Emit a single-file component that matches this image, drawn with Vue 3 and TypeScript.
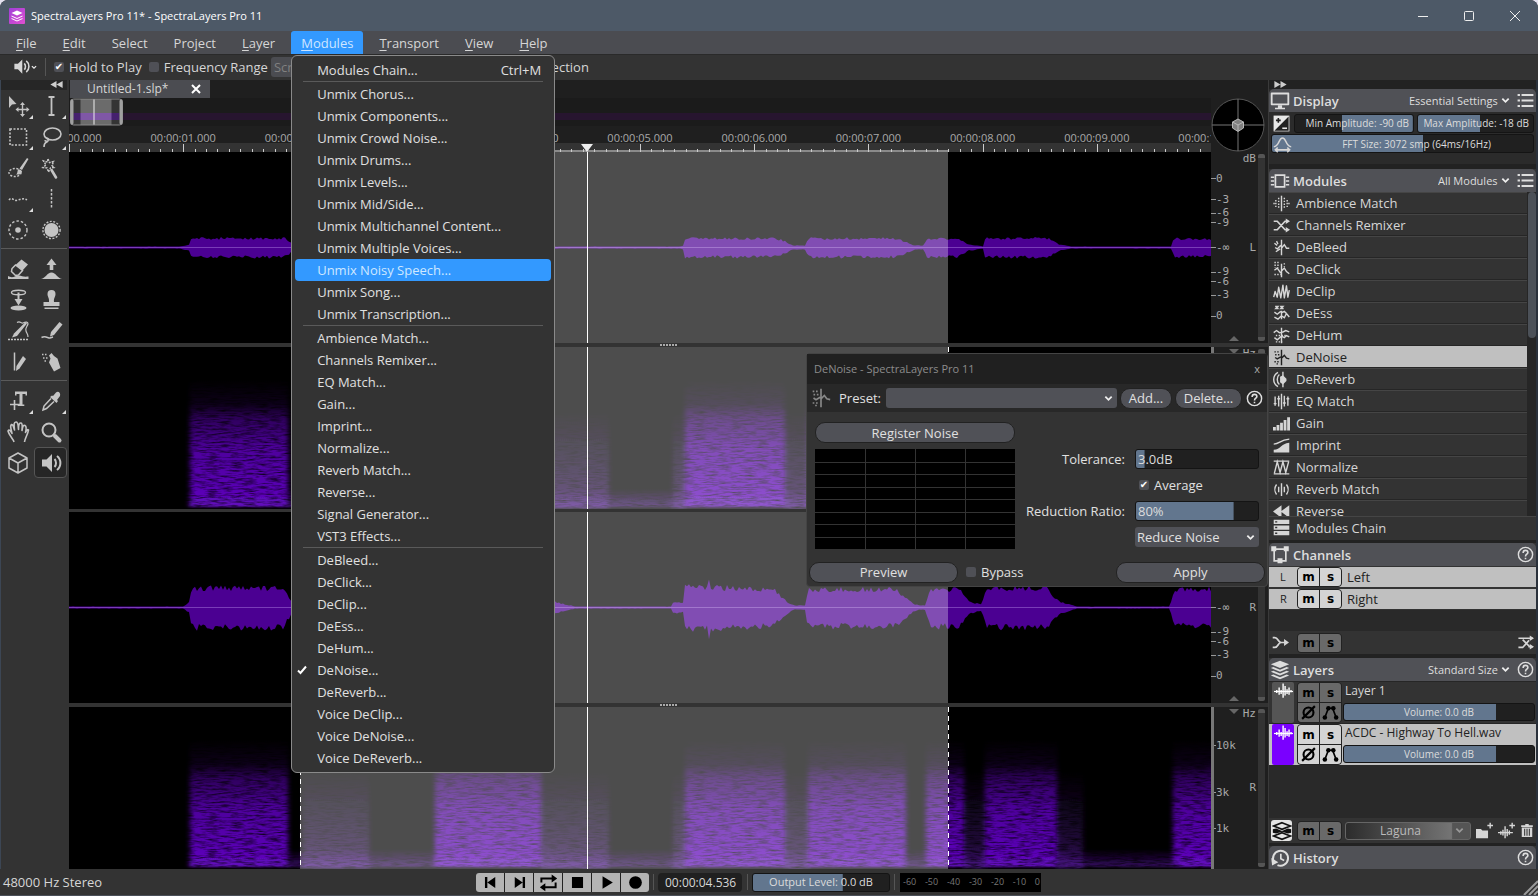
<script setup lang="ts">
import { ref } from 'vue'

interface MenuRow { label: string; shortcut?: string; checked?: boolean }
interface Tool { icon: string; name: string; more?: boolean; active?: boolean }

const menus = ['File', 'Edit', 'Select', 'Project', 'Layer', 'Modules', 'Transport', 'View', 'Help']
const accessKey: Record<string, number> = { Project: 3, Select: -1 }
const keyIndex = (m: string) => accessKey[m] ?? 0

const toRows = (names: string[]): MenuRow[] => names.map((n) => ({ label: n + '...', checked: n === 'DeNoise' }))
const menuGroups: MenuRow[][] = [
  [{ label: 'Modules Chain...', shortcut: 'Ctrl+M' }],
  toRows(['Unmix Chorus', 'Unmix Components', 'Unmix Crowd Noise', 'Unmix Drums', 'Unmix Levels', 'Unmix Mid/Side', 'Unmix Multichannel Content', 'Unmix Multiple Voices', 'Unmix Noisy Speech', 'Unmix Song', 'Unmix Transcription']),
  toRows(['Ambience Match', 'Channels Remixer', 'EQ Match', 'Gain', 'Imprint', 'Normalize', 'Reverb Match', 'Reverse', 'Signal Generator', 'VST3 Effects']),
  toRows(['DeBleed', 'DeClick', 'DeClip', 'DeEss', 'DeHum', 'DeNoise', 'DeReverb', 'Voice DeClip', 'Voice DeNoise', 'Voice DeReverb']),
]
const hovered = 'Unmix Noisy Speech...'

const toolGroups: Tool[][] = [
  [
    { icon: 'move', name: 'Move', more: true }, { icon: 'ibeam', name: 'Time selection', more: true },
    { icon: 'marquee', name: 'Rectangle selection', more: true }, { icon: 'lasso', name: 'Lasso', more: true },
    { icon: 'selbrush', name: 'Brush selection' }, { icon: 'wand', name: 'Magic wand' },
    { icon: 'hdots', name: 'Frequency selection', more: true }, { icon: 'vdots', name: 'Transient selection' },
    { icon: 'ringdot', name: 'Harmonics' }, { icon: 'disc', name: 'Area' },
  ],
  [
    { icon: 'eraser', name: 'Eraser' }, { icon: 'raise', name: 'Amplify' },
    { icon: 'lower', name: 'Transfer' }, { icon: 'stamp', name: 'Clone stamp' },
    { icon: 'heal', name: 'Heal' }, { icon: 'freqpencil', name: 'Frequency pencil' },
    { icon: 'pencil', name: 'Pencil' }, { icon: 'spray', name: 'Noise spray' },
  ],
  [
    { icon: 'text', name: 'Text', more: true }, { icon: 'dropper', name: 'Color picker', more: true },
    { icon: 'hand', name: 'Hand' }, { icon: 'zoom', name: 'Zoom' },
    { icon: 'cube', name: '3D' }, { icon: 'speaker', name: 'Playback', active: true },
  ],
]

const S = 'fill="none" stroke="currentColor"'
const F = 'fill="currentColor"'
const icons: Record<string, string> = {
  move: `<path ${F} d="M3 2v12l3-3.500 4.500-.5z"/><path ${S} stroke-width="1.400" d="M16.500 10v11M11 15.500h11"/><path ${F} d="M16.500 8l2.500 3h-5zM16.500 23l2.500-3h-5zM9.500 15.500l3-2.500v5zM23.500 15.500l-3-2.500v5z"/>`,
  ibeam: `<path ${S} stroke-width="1.800" d="M12.500 3.500v17M9.500 3h6M9.500 21h6"/>`,
  marquee: `<rect ${S} stroke-width="1.600" stroke-dasharray="2 1.500" x="4" y="4" width="16.500" height="16"/>`,
  lasso: `<ellipse ${S} stroke-width="1.600" cx="13.500" cy="9" rx="8.500" ry="6"/><path ${S} stroke-width="1.600" d="M7 13c3 0 3 3 .5 4-2 1-2.500 2-2.500 5M8.500 17.500c-1-1.500-2-2-3-1.500"/>`,
  selbrush: `<ellipse ${S} stroke-width="1.500" stroke-dasharray="2 1.500" cx="9" cy="16.500" rx="6" ry="4"/><path ${F} d="M21 2l1.500 1-6.500 11-2.500-1.500zM12.500 13l3.500 2c0 3-3 4-6 3.500 2-1 1-4 2.500-5.500z"/>`,
  wand: `<path ${S} stroke-width="1.500" stroke-dasharray="2 1" d="M9 3l1.500 3.500 4-1-1.500 4 2 2-3.500.5-2 4-1.500-4-4-.5 3-2.500-2.500-4 4 1z"/><path ${S} stroke-width="2.600" stroke-linecap="round" d="M12.500 14l4.500 7.500"/>`,
  hdots: `<path ${S} stroke-width="1.500" stroke-dasharray="2 1.500" d="M3 13c3-4 5 2 9 0 3-1 6-2 9 0"/>`,
  vdots: `<path ${S} stroke-width="1.500" stroke-dasharray="2.500 1.500" d="M12.500 2v20"/>`,
  ringdot: `<circle ${S} stroke-width="1.400" stroke-dasharray="2.500 2" cx="12" cy="12" r="9"/><circle ${F} cx="12" cy="12" r="2.800"/>`,
  disc: `<circle ${S} stroke-width="1.400" stroke-dasharray="2 1.500" cx="12.500" cy="12" r="8.600"/><circle ${F} cx="12.500" cy="12" r="7"/>`,
  eraser: `<path ${F} d="M15.500 2.500l6.500 5-5.500 6-7-5.500zM2 19c5 3 8-1 11-.5s4 1.500 9.500 1V22H2z"/><path ${S} stroke-width="1.500" d="M9.500 8l7 5.500-4 4.500-3 .5-4-4 .5-3z"/>`,
  raise: `<path ${F} d="M12.500 1.500l5 6.500h-3.200v5h-3.600V8H7.500zM2 22c5-1 6-6.500 10.500-6.500S18 21 23 22z"/>`,
  lower: `<ellipse ${S} stroke-width="1.400" cx="12.500" cy="4.500" rx="7" ry="2.200"/><path ${F} d="M11.500 4.500h2V11h3l-4 6.500-4-6.500h3z"/><ellipse ${F} cx="12.500" cy="20" rx="8" ry="2.500"/>`,
  stamp: `<path ${F} d="M12.500 2a4 4 0 0 1 4 4c0 3-2 4-1.500 8h5.500v4h-16v-4H10c.5-4-1.500-5-1.500-8a4 4 0 0 1 4-4zM5.500 19.500h14V21h-14z"/>`,
  heal: `<path ${S} stroke-width="1.600" stroke-dasharray="2 1" d="M2 20.500h20"/><path ${F} d="M19.500 3l1.500 1.500L11 17l-5 1.500 2-4z"/><path ${S} stroke-width="1.200" d="M11 3.500c3-2 4 1 6 .5 3-1.500 5-1 5 1-1 3-3 4-2 7s2 3 2 6"/>`,
  freqpencil: `<path ${F} d="M20.500 3l3 2.500L15 16l-4 1.500 1-4.500z"/><path ${S} stroke-width="1.600" d="M2.500 18.500c4-2 6 .5 8.500.5l3-1"/>`,
  pencil: `<path ${S} stroke-width="1.500" d="M8.500 2.500v18"/><path ${F} d="M17 6l3 3-6.500 9.500L10 21l.5-5z"/>`,
  spray: `<path ${F} d="M10 5.500l2.500-2.500 2.500 3 3.500 2.500 3 9.500-6.500 3.500-5-9 1.500-4z"/><path ${S} stroke-width="1.600" stroke-dasharray="1.500 1.500" d="M3 4.500h6M4 8h5M5.500 11h3"/>`,
  text: `<path ${F} d="M9 2.500h12v4h-1.500V5h-3v10.500h1.800V17h-6.600v-1.500h1.800V5h-3v1.500H9z"/><path ${S} stroke-width="1.600" d="M4 15.500h10M8.500 11v10"/>`,
  dropper: `<path ${F} d="M17 3.500c2-2 5 0 4 3.500l-3 4 1 1-1.500 2-6.500-6L13 6.500l1 .5z"/><path ${S} stroke-width="1.500" d="M12 9.500l-7 7.500-1 4 3.500-1.500 7.500-7"/>`,
  hand: `<path ${S} stroke-width="1.600" stroke-linejoin="round" d="M8 22c-.5-3-5-6.500-6-11 1-2 2.500-.5 4 2.500C5 8 3.500 6 5.500 4.500 7.500 4 7.500 8 8.500 10 8 5 7.500 2 10 2s2 4 2.500 7.500c0-4 .5-7 2.500-6.500s1 4.500 1 7.500c.5-3 1-6 3-5s1 5 .5 7c1-2 2-3.500 3-2.500-.5 4-3.500 8-4 12"/>`,
  zoom: `<circle ${S} stroke-width="2" cx="10" cy="10" r="6.500"/><path ${S} stroke-width="4" stroke-linecap="round" d="M16 16l4.500 4.500"/>`,
  cube: `<path ${S} stroke-width="1.500" stroke-linejoin="round" d="M12 2l9 5v10l-9 5-9-5V7zM3 7l9 5 9-5M12 12v10"/>`,
  speaker: `<path ${F} d="M3 8.500h4.500L13 3v18l-5.500-5.500H3z"/><path ${S} stroke-width="2" d="M15.500 8c2 2 2 6 0 8M18 5c4.500 3.500 4.500 10.500 0 14"/>`,
  display: `<path ${S} stroke-width="2.200" stroke-linejoin="round" d="M2 3h20v13H2z"/><path ${F} d="M9.500 17h5v3H18v2H6v-2h3.500z"/>`,
  modules: `<path ${S} stroke-width="2" d="M6.500 5h11v14h-11z"/><path ${S} stroke-width="2" d="M1 7.500h4M1 12h4M1 16.500h4M19 7.500h4M19 12h4M19 16.500h4"/>`,
  channels: `<path ${S} stroke-width="2" d="M5 5h14v14H5z"/><path ${F} d="M1.500 1.500h6v6h-6zM16.500 1.500h6v6h-6zM9 16h6v6H9z"/>`,
  layers: `<path ${F} d="M12 1l11 4-11 4.500L1 5zM1 9.500l3-1 8 3.200 8-3.200 3 1L12 14zM1 14l3-1 8 3.200 8-3.200 3 1-11 4.500zM1 18.500l3-1 8 3.200 8-3.200 3 1L12 23z"/>`,
  composite: `<path ${S} stroke-width="2" d="M12 2l10 4-10 4L2 6zM12 14l10 4-10 4-10-4z"/><path ${F} d="M1 10l4-1 7 3 7-3 4 1v4l-4 1-7-2-7 2-4-1z"/>`,
  history: `<path ${S} stroke-width="2.400" d="M5 17a9 9 0 1 1 4 3.500"/><path ${F} d="M1.500 12l1 9L10 17z"/><path ${S} stroke-width="2" d="M13 7v6l4 2"/>`,
  list: `<path ${S} stroke-width="2.400" d="M7 5h15M7 12h15M7 19h15"/><path ${S} stroke-width="2.400" d="M2 5h3M2 12h3M2 19h3"/>`,
  help: `<circle ${S} stroke-width="1.800" cx="12" cy="12" r="9"/><path ${S} stroke-width="2" d="M9 10c0-4.500 6-4 6-.5 0 2.200-3 2.200-3 5M12 16v2"/>`,
  contrast: `<path fill="#e8e8e8" d="M2 2h20v20H2z"/><path fill="#222" d="M21 3v18H3z"/><path stroke="#222" stroke-width="2" d="M5 8h6M8 5v6"/><path stroke="#e8e8e8" stroke-width="2" d="M13 18h6"/>`,
  fft: `<path ${S} stroke-width="2" d="M1 16c7 0 6-11 11-11s4 11 11 11M3 20h18M6 17l-3 3 3 3M18 17l3 3-3 3"/>`,
  ambience: `<path ${S} stroke-width="2" d="M12 1v22"/><path ${S} stroke-width="2" stroke-dasharray="2 2" d="M8 4v16M16 4v16M4 7v11M20 7v11M1.500 11v4M22.500 11v4"/>`,
  shuffle: `<path ${S} stroke-width="2.400" d="M1 6h5l11 12h4M1 18h5L17 6h4"/><path ${F} d="M18 2l6 4-6 4zM18 14l6 4-6 4z"/>`,
  debleed: `<path ${S} stroke-width="2" d="M12 1v22M12 13l4-5 3 5h4M2 6l4 3M3 12l3 2 5-5M5 3l2 4M4 18l6-4"/>`,
  declick: `<path ${S} stroke-width="2" d="M12 4v19M12 14l4-4 3 5 4 3M2 13l4-3 5 7"/><path ${S} stroke-width="2" stroke-dasharray="2 2" d="M3 1v9M7 1v9M2 19h9M16 3v5"/>`,
  declip: `<path ${S} stroke-width="2" stroke-linejoin="round" d="M1 20l2-8 3 8 2-14 3 15 3-18 2 18 3-17 2 16 2-10"/>`,
  deess: `<path ${S} stroke-width="2" d="M3 2h4L4 5h4M10 2h4l-3 3h4M2 10l4 3 5-4M2 17l5 3 5-5 4 3 3-6 4 5M12 8v12M12 11l4-2 3 3"/>`,
  dehum: `<path ${S} stroke-width="2" d="M12 1v22M1 8l4-3 4 3 5-1 4-2 5 2M2 15l4 3 6-5 4 2 3-3 4 2"/><path ${S} stroke-width="2" stroke-dasharray="2 2" d="M4 12h16M4 21h9"/>`,
  denoise: `<path ${S} stroke-width="2" d="M12 1v22M12 13l4-4 3 4 4 1M3 12l3 2 5-3"/><path ${S} stroke-width="2" stroke-dasharray="2 2" d="M2 4h8M3 8h6M2 18h8M5 21h4"/>`,
  dereverb: `<path ${S} stroke-width="2" d="M14 1v22M9 5c-4 3-4 11 0 14M7 2C-1 7-1 17 7 22"/><path ${F} d="M10 8l4-2 5 5v3l-5 5-4-3z"/>`,
  eqmatch: `<path ${S} stroke-width="2" d="M12 1v22M3 5v13M8 4v15M16 4v15M21 5v13M1 15h4M6 8h4M14 14h4M19 8h4"/>`,
  gain: `<path ${F} d="M0 17h4v5H0zM5 14h4v8H5zM10 11h4v11h-4zM15 7h4v15h-4zM20 3h4v19h-4z"/>`,
  imprint: `<path ${S} stroke-width="2" d="M1 10c9 0 8-6 22-7"/><path ${F} d="M1 22v-4c10 0 10-9 22-10v14z"/>`,
  normalize: `<path ${S} stroke-width="2" d="M1 3h22M1 21h22M2 20L6 4l4 15 4-15 4 15 4-15"/>`,
  reverbmatch: `<path ${S} stroke-width="2" d="M12 3v18M8 8v8M16 8v8M5 5c-3 4-3 10 0 14M19 5c3 4 3 10 0 14"/>`,
  reverse: `<path ${F} d="M12 3v18L0 12zM23 3v18l-12-9z"/>`,
  chain: `<path ${F} d="M1 1h22v6H1zM1 9h22v6H1zM1 17h22v6H1z"/><path fill="#333" d="M3 3h3v2H3zM3 11h3v2H3zM3 19h3v2H3z"/>`,
  merge: `<path ${S} stroke-width="2.400" d="M1 5h3c5 0 4 7 9 7h7M1 19h3c5 0 4-7 9-7"/><path ${F} d="M17 7l7 5-7 5z"/>`,
  route: `<path ${S} stroke-width="2.400" d="M2 6h20M2 19h6l9-10M16 18h6M8 8l10 10"/><path ${F} d="M18 2l6 4-6 4zM18 14l6 4-6 4z"/>`,
  wave: `<path ${S} stroke-width="1.800" d="M3.500 10v4M6.500 7v9M9 10v5M11.500 2v18M14 5v12M16.500 9v6M19 7v9M21.500 10v3"/><path ${S} stroke-width="1.500" d="M0 12h24"/>`,
  phase: `<circle ${S} stroke-width="3" cx="12" cy="12" r="7"/><path ${S} stroke-width="3" d="M3 21L21 3"/>`,
  nodes: `<path ${S} stroke-width="2.400" d="M4 19l5-13h6l5 13"/><circle ${F} cx="4" cy="19" r="3.200"/><circle ${F} cx="9" cy="6" r="3.200"/><circle ${F} cx="16" cy="6" r="3.200"/><circle ${F} cx="20" cy="19" r="3.200"/>`,
  folder: `<path ${F} d="M0 10h7l2 2h8v11H0z"/><path ${S} stroke-width="2" d="M20 1v8M16 5h8"/>`,
  waveadd: `<path ${S} stroke-width="2" d="M0 15h21M4 13v5M7 11v8M10 6v17M13 10v10M16 12v6M20 1v8M16 5h8"/>`,
  trash: `<path ${F} d="M9 1h6v2h7v3H2V3h7zM3 7h18v16H3z"/><path stroke="#333" stroke-width="1.800" d="M8 9v12M12 9v12M16 9v12"/>`,
}

const modules: [string, string][] = [
  ['ambience', 'Ambience Match'], ['shuffle', 'Channels Remixer'], ['debleed', 'DeBleed'], ['declick', 'DeClick'],
  ['declip', 'DeClip'], ['deess', 'DeEss'], ['dehum', 'DeHum'], ['denoise', 'DeNoise'], ['dereverb', 'DeReverb'],
  ['eqmatch', 'EQ Match'], ['gain', 'Gain'], ['imprint', 'Imprint'], ['normalize', 'Normalize'],
  ['reverbmatch', 'Reverb Match'], ['reverse', 'Reverse'],
]
const selectedModule = ref('DeNoise')
const channels = [['L', 'Left'], ['R', 'Right']]
const layers = [{ name: 'Layer 1', on: false }, { name: 'ACDC - Highway To Hell.wav', on: true }]

/* Timeline: ten seconds across the canvas, canvas units are 1142 wide */
const W = 1142
const seconds = Array.from({ length: 11 }, (_, i) => ({ left: i * 10 + '%', text: `00:00:${String(i).padStart(2, '0')}.000` }))
const ticks = Array.from({ length: 101 }, (_, i) => {
  const x = Math.round((i * W) / 100) + 0.5
  return `M${x} ${i % 10 ? 6 : 1}V9`
}).join('')

let seed = 11
const rnd = () => {
  seed = (seed * 1103515245 + 12345) % 2147483648
  return seed / 2147483648
}
function wavePath(env: [number, number][], mid: number): string {
  const up: string[] = []
  const down: string[] = []
  let k = 0
  for (let x = 0; x <= W; x += 2) {
    while (k < env.length - 2 && env[k + 1][0] < x) k++
    const [x0, a0] = env[k]
    const [x1, a1] = env[k + 1]
    const a = a0 + (a1 - a0) * Math.min(1, Math.max(0, (x - x0) / (x1 - x0)))
    up.push(`${x} ${(mid - a * (0.84 + rnd() * 0.32)).toFixed(1)}`)
    down.unshift(`${x} ${(mid + a * (0.86 + rnd() * 0.36)).toFixed(1)}`)
  }
  return `M${up.join('L')}L${down.join('L')}Z`
}
const waveL = wavePath([[0, 1], [111, 1], [120, 3], [122, 9], [216, 9], [222, 5], [232, 2], [360, 2], [362, 10], [470, 10], [484, 1], [610, 1], [615, 2], [616, 9], [708, 9], [718, 5], [724, 2], [737, 2], [739, 9], [828, 9], [846, 2], [855, 2], [858, 9], [889, 9], [899, 3], [915, 1], [916, 9], [980, 9], [990, 3], [1002, 1], [1102, 1], [1105, 9], [1142, 8]], 95.5)
const waveR = wavePath([[0, 1], [115, 1], [120, 5], [123, 19], [214, 19], [222, 7], [232, 2], [360, 2], [362, 18], [470, 18], [488, 5], [506, 1], [602, 1], [604, 5], [614, 5], [616, 20], [638, 20], [640, 28], [642, 20], [704, 18], [719, 5], [726, 2], [736, 2], [739, 18], [826, 18], [844, 4], [850, 2], [856, 2], [862, 18], [890, 18], [900, 6], [912, 3], [918, 19], [978, 19], [990, 6], [1008, 1], [1101, 1], [1105, 17], [1142, 18]], 95.5)

const bursts = [
  { x: 121, w: 98 }, { x: 366, w: 106 }, { x: 616, w: 100 }, { x: 739, w: 98 },
  { x: 857, w: 38 }, { x: 916, w: 72 }, { x: 1104, w: 50 },
]
const hazes = [{ x: 234, w: 66 }, { x: 470, w: 70 }, { x: 604, w: 12 }, { x: 716, w: 24 }, { x: 895, w: 22 }, { x: 988, w: 26 }]

const dbMarks = [['0', 14], ['-3', 25], ['-6', 32], ['-9', 37], ['-∞', 50], ['-9', 63], ['-6', 68], ['-3', 75], ['0', 86]] as [string, number][]
const hzMarks = [['10k', 24], ['3k', 53], ['1k', 75]] as [string, number][]
const panes = [
  { id: 'L', kind: 'wave', path: waveL, marks: dbMarks, unit: 'dB' },
  { id: 'L', kind: 'spec', path: '', marks: hzMarks, unit: 'Hz' },
  { id: 'R', kind: 'wave', path: waveR, marks: dbMarks, unit: '' },
  { id: 'R', kind: 'spec', path: '', marks: hzMarks, unit: 'Hz' },
]

const transport = [
  ['Go to start', '<path d="M5 5h3v14H5zM18 5v14l-10-7z"/>'],
  ['Go to end', '<path d="M16 5h3v14h-3zM6 5v14l10-7z"/>'],
  ['Loop', '<path fill="none" stroke="#000" stroke-width="2.500" d="M3 12V7h14M21 12v6H7"/><path d="M16 2l7 5-7 5zM8 13l-7 5 7 5z"/>'],
  ['Stop', '<path d="M5 5h14v14H5z"/>'],
  ['Play', '<path d="M7 4l13 8-13 8z"/>'],
  ['Record', '<circle cx="12" cy="12" r="8"/>'],
]
const meter = ['-60', '-50', '-40', '-30', '-20', '-10', '0']
const holdToPlay = ref(true)
const freqRange = ref(false)
const average = ref(true)
const bypass = ref(false)
</script>

<template>
  <div class="window">
    <header class="titlebar">
      <svg class="logo" viewBox="0 0 16 16"><defs><linearGradient id="lg" x1="0" y1="0" x2="1" y2="1"><stop offset="0" stop-color="#a03fd8" /><stop offset="1" stop-color="#e04fd0" /></linearGradient></defs><rect width="16" height="16" rx="1" fill="url(#lg)" /><path fill="#fff" d="M8 2.500l5.500 2.500L8 7.500 2.500 5zM2.500 7.500L8 10l5.500-2.500v1L8 11 2.500 8.500zM2.500 10L8 12.500l5.500-2.500v1L8 13.500 2.500 11z" /></svg>
      <span class="title">SpectraLayers Pro 11* - SpectraLayers Pro 11</span>
      <div class="winbtns">
        <button aria-label="Minimize"><svg viewBox="0 0 12 12"><path d="M1 6.500h10" /></svg></button>
        <button aria-label="Maximize"><svg viewBox="0 0 12 12"><rect x="1.500" y="1.500" width="9" height="9" rx="1" /></svg></button>
        <button aria-label="Close"><svg viewBox="0 0 12 12"><path d="M1 1l10 10M11 1L1 11" /></svg></button>
      </div>
    </header>

    <nav class="menubar">
      <div v-for="m in menus" :key="m" class="menu">
        <button class="menu-title" :class="{ open: m === 'Modules' }"><template v-if="keyIndex(m) >= 0">{{ m.slice(0, keyIndex(m)) }}<u>{{ m[keyIndex(m)] }}</u>{{ m.slice(keyIndex(m) + 1) }}</template><template v-else>{{ m }}</template></button>
        <div v-if="m === 'Modules'" class="popup" role="menu">
          <div v-for="(g, gi) in menuGroups" :key="gi" class="popup-group">
            <button v-for="r in g" :key="r.label" role="menuitem" class="popup-item" :class="{ hover: r.label === hovered }">
              <svg v-if="r.checked" class="check" viewBox="0 0 10 10"><path d="M1 5.500l2.500 2.500L9 1.500" /></svg>
              <span>{{ r.label }}</span><span v-if="r.shortcut">{{ r.shortcut }}</span>
            </button>
          </div>
        </div>
      </div>
    </nav>

    <div class="toolbar">
      <button class="listen" aria-label="Playback mode"><svg class="i18" viewBox="0 0 24 24" v-html="icons.speaker" /><svg class="chev tiny" viewBox="0 0 10 10"><path d="M1.500 3.500L5 7l3.500-3.500" /></svg></button>
      <span class="vsep" />
      <label class="tick"><input v-model="holdToPlay" type="checkbox" />Hold to Play</label>
      <label class="tick"><input v-model="freqRange" type="checkbox" />Frequency Range</label>
      <button class="scrub" disabled>Scrub</button>
      <span>Selection</span>
    </div>

    <main class="work">
      <aside class="tools">
        <div class="collapse"><svg viewBox="0 0 14 8"><path d="M7 0v8L0 4zM14 0v8L7 4z" /></svg></div>
        <div v-for="(g, gi) in toolGroups" :key="gi" class="tool-group">
          <button v-for="t in g" :key="t.icon" class="tool" :class="{ more: t.more, active: t.active }" :aria-label="t.name"><svg class="i24" viewBox="0 0 24 24" v-html="icons[t.icon]" /></button>
        </div>
      </aside>

      <section class="center">
        <div class="tabs"><div class="tab"><span>Untitled-1.slp*</span><button aria-label="Close tab"><svg viewBox="0 0 10 10"><path d="M1 1l8 8M9 1L1 9" /></svg></button></div></div>
        <div class="head">
          <div class="timeline">
            <div class="overview"><div class="ov-line" />
              <svg class="ov-box" viewBox="0 0 54 28"><rect x="1" y="1" width="52" height="26" fill="#343434" /><rect x="11" y="1" width="31" height="26" fill="#6b6b6b" /><rect x="4" y="15" width="46" height="7" fill="#45206e" /><rect x="11" y="15" width="31" height="7" fill="#7f57a6" /><path stroke="#eee" d="M24.500 1v26" /><rect x="1" y="1" width="52" height="26" rx="3" fill="none" stroke="#8a8a8a" /><path stroke="#a0a0a0" stroke-width="3" stroke-linecap="round" d="M2.500 3v22M51.500 3v22" /></svg>
            </div>
            <div class="ruler">
              <span v-for="s in seconds" :key="s.text" class="stamp" :style="{ left: s.left }">{{ s.text }}</span>
              <svg class="ticks" viewBox="0 0 1142 9" preserveAspectRatio="none"><rect width="1142" height="9" fill="#333" /><rect x="231" y="7" width="648" height="2" fill="#8a8a8a" /><path :d="ticks" stroke="#ccc" /><path d="M512 1h12l-6 8z" fill="#eee" /></svg>
            </div>
          </div>
          <svg class="gizmo" viewBox="0 0 54 54"><circle cx="27" cy="27" r="26" fill="#000" stroke="#555" /><path stroke="#777" d="M27 1v52M1 27h52" /><path d="M27 21l5.500 3v6L27 33.500l-5.500-3.500v-6z" fill="#808080" stroke="#b8b8b8" /><path d="M21.500 24l5.500 3 5.500-3M27 27v6" stroke="#b8b8b8" fill="none" /></svg>
        </div>

        <div class="panes">
          <svg class="defs" width="0" height="0" aria-hidden="true"><defs>
            <linearGradient id="burst" x1="0" y1="0" x2="0" y2="1"><stop offset="0" stop-color="#5a00b0" stop-opacity="0" /><stop offset=".2" stop-color="#5a00b0" stop-opacity=".14" /><stop offset=".32" stop-color="#5000a0" stop-opacity=".6" /><stop offset=".55" stop-color="#5600ae" stop-opacity=".9" /><stop offset="1" stop-color="#5e04be" /></linearGradient>
            <linearGradient id="haze" x1="0" y1="0" x2="0" y2="1"><stop offset=".2" stop-color="#5a20a0" stop-opacity="0" /><stop offset=".7" stop-color="#5a20a0" stop-opacity=".3" /><stop offset="1" stop-color="#5a20a0" stop-opacity=".5" /></linearGradient>
            <linearGradient id="floor" x1="0" y1="0" x2="0" y2="1"><stop offset="0" stop-color="#5a00b0" stop-opacity="0" /><stop offset="1" stop-color="#6a20c0" stop-opacity=".5" /></linearGradient>
            <filter id="soft" x="-10%" y="-10%" width="120%" height="120%"><feGaussianBlur stdDeviation="2.500 1" /></filter>
            <filter id="grain" x="0" y="0" width="100%" height="100%"><feTurbulence type="fractalNoise" baseFrequency="0.08 0.6" numOctaves="3" seed="4" /><feColorMatrix values="0 0 0 0 0  0 0 0 0 0  0 0 0 0 0  1.600 0 0 0 -0.640" /></filter>
          </defs></svg>
          <template v-for="(p, i) in panes" :key="i">
            <div v-if="i" class="split" :class="{ grip: i !== 2 }" />
            <div class="pane" :class="p.kind">
              <svg v-if="p.kind === 'wave'" class="canvas" viewBox="0 0 1142 191" preserveAspectRatio="none">
                <path :d="p.path" fill="#4b0092" />
                <path d="M0 95.500h1142" stroke="#7a3cb8" />
                <rect x="231" width="648" height="191" fill="#fff" fill-opacity=".3" />
                <path d="M518.500 0v191" stroke="#fff" vector-effect="non-scaling-stroke" />
              </svg>
              <svg v-else class="canvas" viewBox="0 0 1142 162" preserveAspectRatio="none">
                <g filter="url(#soft)">
                  <rect v-for="h in hazes" :key="h.x" :x="h.x" y="40" :width="h.w" height="122" fill="url(#haze)" />
                  <rect v-for="b in bursts" :key="b.x" :x="b.x" y="32" :width="b.w" height="128" fill="url(#burst)" />
                  <rect x="120" y="142" width="1022" height="18" fill="url(#floor)" />
                </g>
                <rect width="1142" height="162" filter="url(#grain)" />
                <rect x="231" width="648" height="162" fill="#fff" fill-opacity=".3" />
                <path d="M231.500 0v162M879.500 0v162" stroke="#fff" stroke-dasharray="5 4" />
                <path d="M518.500 0v162" stroke="#fff" vector-effect="non-scaling-stroke" />
              </svg>
              <div class="scale">
                <span class="unit">{{ p.unit }}</span>
                <span v-for="(m, mi) in p.marks" :key="mi" class="mark" :style="{ top: m[1] + '%' }">{{ m[0] }}</span>
                <span class="side">{{ p.id }}</span>
                <i v-if="p.kind === 'wave'" class="tri up" /><i v-else class="tri down" />
                <i class="vbar" />
              </div>
            </div>
          </template>
        </div>

        <form class="dialog" @submit.prevent>
          <div class="dlg-title"><span>DeNoise - SpectraLayers Pro 11</span><button type="button" aria-label="Close dialog">x</button></div>
          <div class="dlg-preset">
            <svg class="i20 dim" viewBox="0 0 24 24" v-html="icons.denoise" />
            <label for="preset">Preset:</label>
            <span class="combo box grow"><select id="preset"><option></option></select><svg class="chev" viewBox="0 0 10 10"><path d="M1.500 3L5 6.500 8.500 3" /></svg></span>
            <button type="button" class="pill add">Add...</button>
            <button type="button" class="pill del">Delete...</button>
            <button type="button" class="flat" aria-label="Help"><svg class="i18" viewBox="0 0 24 24" v-html="icons.help" /></button>
          </div>
          <div class="dlg-body">
            <div class="noise">
              <button type="button" class="pill">Register Noise</button>
              <svg class="graph" viewBox="0 0 200 100" preserveAspectRatio="none"><rect width="200" height="100" fill="#000" /><path stroke="#333" d="M50.500 0v100M100.500 0v100M150.500 0v100M0 13.500h200M0 25.500h200M0 38.500h200M0 50.500h200M0 63.500h200M0 75.500h200M0 88.500h200" /></svg>
            </div>
            <div class="params">
              <label for="tol">Tolerance:</label>
              <div class="slider left"><input id="tol" type="range" value="7" class="p7" /><span>3.0dB</span></div>
              <label class="tick avg"><input v-model="average" type="checkbox" />Average</label>
              <label for="ratio">Reduction Ratio:</label>
              <div class="slider left"><input id="ratio" type="range" value="80" class="p80" /><span>80%</span></div>
              <span class="combo box avg"><select aria-label="Mode"><option>Reduce Noise</option></select><svg class="chev" viewBox="0 0 10 10"><path d="M1.500 3L5 6.500 8.500 3" /></svg></span>
            </div>
          </div>
          <div class="dlg-foot">
            <button type="button" class="pill wide">Preview</button>
            <label class="tick"><input v-model="bypass" type="checkbox" />Bypass</label>
            <button class="pill wide end">Apply</button>
          </div>
        </form>
      </section>

      <aside class="side-panels">
        <div class="collapse right"><svg viewBox="0 0 14 8"><path d="M0 0v8l7-4zM7 0v8l7-4z" /></svg></div>

        <section class="panel display">
          <h2 class="ph"><svg class="i20" viewBox="0 0 24 24" v-html="icons.display" /><span>Display</span>
            <span class="combo"><select aria-label="Display preset"><option>Essential Settings</option></select><svg class="chev" viewBox="0 0 10 10"><path d="M1.500 3L5 6.500 8.500 3" /></svg></span>
            <button class="flat" aria-label="Display options"><svg class="i18" viewBox="0 0 24 24" v-html="icons.list" /></button></h2>
          <div class="amp">
            <svg class="i18" viewBox="0 0 24 24" v-html="icons.contrast" />
            <label class="slider small"><input type="range" value="50" class="pmin" /><span class="toright">Min Amplitude: -90 dB</span></label>
            <label class="slider small"><input type="range" value="54" class="p54" /><span class="toright">Max Amplitude: -18 dB</span></label>
          </div>
          <label class="slider small fft"><input type="range" value="58" class="p58" /><svg class="i18" viewBox="0 0 24 24" v-html="icons.fft" /><span>FFT Size: 3072 smp (64ms/16Hz)</span></label>
        </section>

        <section class="panel mods">
          <h2 class="ph"><svg class="i20" viewBox="0 0 24 24" v-html="icons.modules" /><span>Modules</span>
            <span class="combo"><select aria-label="Module filter"><option>All Modules</option></select><svg class="chev" viewBox="0 0 10 10"><path d="M1.500 3L5 6.500 8.500 3" /></svg></span>
            <button class="flat" aria-label="Module options"><svg class="i18" viewBox="0 0 24 24" v-html="icons.list" /></button></h2>
          <div class="mod-area">
            <ul class="mod-list">
              <li v-for="m in modules" :key="m[1]"><button class="mod" :class="{ on: m[1] === selectedModule }" @click="selectedModule = m[1]"><svg class="i16" viewBox="0 0 24 24" v-html="icons[m[0]]" />{{ m[1] }}</button></li>
            </ul>
            <i class="thumb" />
          </div>
          <button class="mod chain"><svg class="i16" viewBox="0 0 24 24" v-html="icons.chain" />Modules Chain</button>
        </section>

        <section class="panel chans">
          <h2 class="ph"><svg class="i20" viewBox="0 0 24 24" v-html="icons.channels" /><span>Channels</span>
            <button class="flat push" aria-label="Channels help"><svg class="i18" viewBox="0 0 24 24" v-html="icons.help" /></button></h2>
          <div v-for="c in channels" :key="c[0]" class="chan"><span class="cid">{{ c[0] }}</span><span class="ms lit"><button>m</button><button>s</button></span><span>{{ c[1] }}</span></div>
          <div class="blank" />
          <div class="strip"><svg class="i16" viewBox="0 0 24 24" v-html="icons.merge" /><span class="ms"><button>m</button><button>s</button></span><button class="flat push" aria-label="Routing"><svg class="i16" viewBox="0 0 24 24" v-html="icons.route" /></button></div>
        </section>

        <section class="panel lays">
          <h2 class="ph"><svg class="i20" viewBox="0 0 24 24" v-html="icons.layers" /><span>Layers</span>
            <span class="combo"><select aria-label="Layer size"><option>Standard Size</option></select><svg class="chev" viewBox="0 0 10 10"><path d="M1.500 3L5 6.500 8.500 3" /></svg></span>
            <button class="flat" aria-label="Layers help"><svg class="i18" viewBox="0 0 24 24" v-html="icons.help" /></button></h2>
          <div v-for="l in layers" :key="l.name" class="layer" :class="{ on: l.on }">
            <div class="swatch"><svg class="i18" viewBox="0 0 24 24" v-html="icons.wave" /></div>
            <div class="quad ms" :class="{ lit: l.on }"><button>m</button><button>s</button><button aria-label="Phase"><svg class="i16" viewBox="0 0 24 24" v-html="icons.phase" /></button><button aria-label="Envelope"><svg class="i16" viewBox="0 0 24 24" v-html="icons.nodes" /></button></div>
            <div class="lbody"><span class="lname">{{ l.name }}</span><label class="slider small"><input type="range" value="79" class="p79" /><span>Volume: 0.0 dB</span></label></div>
          </div>
          <div class="blank" />
          <div class="strip tall">
            <button class="white" aria-label="Composite"><svg class="i20" viewBox="0 0 24 24" v-html="icons.composite" /></button>
            <span class="ms"><button>m</button><button>s</button></span>
            <span class="combo laguna"><select aria-label="Color map"><option>Laguna</option></select><svg class="chev" viewBox="0 0 10 10"><path d="M1.500 3L5 6.500 8.500 3" /></svg></span>
            <button class="flat" aria-label="New group"><svg class="i16" viewBox="0 0 24 24" v-html="icons.folder" /></button>
            <button class="flat" aria-label="New layer"><svg class="i16" viewBox="0 0 24 24" v-html="icons.waveadd" /></button>
            <button class="flat" aria-label="Delete layer"><svg class="i16 narrow" viewBox="0 0 24 24" v-html="icons.trash" /></button>
          </div>
        </section>

        <section class="panel hist">
          <h2 class="ph"><svg class="i20" viewBox="0 0 24 24" v-html="icons.history" /><span>History</span>
            <button class="flat push" aria-label="History help"><svg class="i18" viewBox="0 0 24 24" v-html="icons.help" /></button></h2>
        </section>
      </aside>
    </main>

    <footer class="status">
      <span class="fmt">48000 Hz Stereo</span>
      <div class="deck"><button v-for="t in transport" :key="t[0]" :aria-label="t[0]"><svg class="i18" viewBox="0 0 24 24" v-html="t[1]" /></button></div>
      <i class="vsep" />
      <input class="clock" aria-label="Position" value="00:00:04.536" />
      <i class="vsep" />
      <label class="slider out"><input type="range" value="66" class="p66" /><span>Output Level: 0.0 dB</span></label>
      <i class="vsep" />
      <div class="meter"><span v-for="v in meter" :key="v">{{ v }}</span></div>
      <svg class="sizer" viewBox="0 0 16 16"><path d="M2 16L16 2M7 16l9-9M12 16l4-4" /></svg>
    </footer>
  </div>
</template>

<style>
body { margin: 0; background: #e4e2f0; }
</style>
<style scoped>
* { box-sizing: border-box; }
.window { display: flex; flex-direction: column; height: 100vh; min-height: 896px; min-width: 1200px; overflow: hidden; border-radius: 8px 8px 0 0; background: #333; color: #d6d6d6; font: 13px/18px "Open Sans", "Noto Sans", sans-serif; }
button, select, input { font: inherit; color: inherit; margin: 0; padding: 0; border: 0; background: none; border-radius: 0; }
button { display: flex; align-items: center; justify-content: center; white-space: nowrap; }
svg { display: block; flex: none; }
.i16 { width: 17px; height: 17px; }
.i18 { width: 19px; height: 19px; }
.i20 { width: 20px; height: 20px; }
.i24 { width: 24px; height: 24px; }
.chev { width: 9px; height: 9px; fill: none; stroke: #eee; stroke-width: 2; }
.tiny { width: 6px; height: 6px; }

.titlebar { display: flex; align-items: center; height: 31px; flex: none; padding-left: 9px; background: #4d5967; color: #fff; font-size: 11px; }
.logo { width: 16px; height: 16px; margin-right: 6px; }
.winbtns { display: flex; margin-left: auto; }
.winbtns button { width: 46px; height: 31px; }
.winbtns svg { width: 12px; height: 12px; fill: none; stroke: #eee; }

.menubar { display: flex; gap: 6px; height: 24px; flex: none; padding-left: 6px; background: #4b4c51; border-bottom: 1px solid #2a2a2a; }
.menu { position: relative; }
.menu-title { height: 23px; padding: 0 10px; }
.menu-title.open { background: #3399ff; border-radius: 3px 3px 0 0; color: #cfe6ff; }
u { text-underline-offset: 2px; }
.popup { position: absolute; z-index: 10; left: 0; top: 24px; width: 264px; padding: 3px; border: 1px solid #8a8a8a; border-radius: 6px; background: #333; color: #e0e0e0; }
.popup-group + .popup-group::before { content: ""; display: block; height: 1px; margin: 0 8px 1px; background: #5a5a5a; }
.popup-item { display: flex; justify-content: space-between; width: 100%; height: 22px; padding: 0 10px 0 22px; border-radius: 4px; position: relative; }
.popup-item.hover { background: #3399ff; color: #cfe8ff; }
.check { position: absolute; left: 2px; width: 10px; height: 10px; fill: none; stroke: #fff; stroke-width: 2; }

.toolbar { display: flex; align-items: center; height: 25px; flex: none; padding: 0 0 2px 12px; background: #333; }
.vsep { width: 1px; height: 18px; margin: 0 8px; background: #555; flex: none; }
.tick { display: flex; align-items: center; gap: 5px; white-space: nowrap; }
.toolbar .tick { margin-right: 7px; }
.tick input { appearance: none; width: 10px; height: 10px; border-radius: 2px; background: #4f5056; display: grid; place-items: center; }
.tick input:checked::after { content: "✔"; font: 10px/10px "DejaVu Sans", sans-serif; color: #fff; }
.scrub { width: 253px; height: 20px; padding-left: 3px; justify-content: flex-start; border-radius: 3px; background: #4b4c51; color: #808080; margin-left: -4px; margin-right: 10px; }

.work { flex: 1; display: flex; min-height: 0; }
.tools { width: 69px; flex: none; padding-right: 2px; border-left: 1px solid #3c4654; background: #333; }
.collapse { display: flex; justify-content: flex-end; height: 10px; padding: 1px 4px 0 0; background: #262626; }
.collapse svg { width: 13px; height: 7px; fill: #ccc; }
.tool-group { display: grid; grid-template-columns: 33px 33px; color: #c4c4c4; padding-bottom: 3px; }
.tool-group + .tool-group { border-top: 1px solid #5a5a5a; padding-top: 4px; }
.tool { position: relative; height: 31px; }
.tool.more::after { content: ""; position: absolute; right: 1px; bottom: 2px; border: 2px solid #ddd; border-top-color: transparent; border-left-color: transparent; }
.tool.active { border: 1px solid #555; border-radius: 4px; background: #262626; }

.center { position: relative; flex: 1; min-width: 0; display: flex; flex-direction: column; background: #1f1f1f; }
.tabs { height: 18px; flex: none; display: flex; padding-left: 1px; }
.tab { display: flex; align-items: center; justify-content: space-between; width: 140px; padding: 0 9px 0 17px; background: #4b4c51; font-size: 12px; }
.tab svg { width: 10px; height: 10px; stroke: #fff; stroke-width: 2; fill: none; }
.head { display: flex; height: 54px; flex: none; }
.timeline { flex: 1; min-width: 0; }
.overview { display: flex; flex-direction: column; height: 28px; position: relative; background: #1b1b1b; }
.ov-line { height: 7px; margin-top: 15px; background: #27152f; }
.ov-box { position: absolute; left: 0; top: 0; width: 55px; height: 28px; }
.ruler { position: relative; height: 26px; overflow: hidden; display: flex; flex-direction: column; justify-content: flex-end; color: #a8a8a8; font-size: 11px; }
.stamp { position: absolute; top: 3px; line-height: 18px; transform: translateX(-50%); }
.ticks { width: 100%; height: 9px; }
.gizmo { width: 54px; height: 54px; margin-right: 3px; }
.panes { flex: 1; min-height: 0; display: grid; grid-template-rows: 191fr 4px 162fr 3px 191fr 4px 162fr; }
.defs { position: absolute; }
.split { background: #333; display: flex; justify-content: center; align-items: center; }
.split.grip::before { content: ""; width: 18px; height: 2px; background: repeating-linear-gradient(90deg, #aaa 0 2px, transparent 2px 3px); }
.pane { display: flex; min-height: 0; }
.canvas { flex: 1; min-width: 0; width: 0; height: 100%; background: #000; }
.scale { position: relative; width: 57px; flex: none; overflow: hidden; color: #a8a8a8; font: 11px/12px "DejaVu Sans Mono", "Liberation Mono", monospace; }
.spec .scale { border-left: 3px solid #777; }
.scale > * { position: absolute; }
.unit { right: 12px; top: 1px; }
.side { right: 12px; top: 50%; transform: translateY(-50%); }
.mark { left: 0; display: flex; align-items: center; transform: translateY(-50%); }
.mark::before { content: ""; width: 5px; height: 1px; background: #999; }
.spec .mark { left: -3px; }
.tri { left: 18px; border: 5px solid transparent; }
.spec .tri { left: 15px; }
.tri.up { bottom: 2px; border-bottom-color: #666; border-top: 0; }
.tri.down { top: 2px; border-top-color: #666; border-bottom: 0; }
.vbar { right: 3px; top: 2px; bottom: 2px; width: 7px; background: #333; border-radius: 2px; border-top: 4px solid #555; border-bottom: 4px solid #555; }

.dialog { position: absolute; z-index: 5; right: 0; top: 273px; width: 462px; border: 1px solid #444; border-radius: 4px; background: #333; color: #e0e0e0; }
.dlg-title { display: flex; justify-content: space-between; height: 30px; align-items: center; padding: 0 7px; background: #202020; color: #8c8c8c; font-size: 11px; }
.dlg-title button { color: #aaa; font-size: 11px; }
.dlg-preset { display: flex; align-items: center; height: 28px; padding: 0 3px 0 4px; background: #282828; gap: 3px; }
.dlg-preset label { margin: 0 2px 0 5px; }
.dim { color: #888; }
.grow { flex: 1; }
.pill { height: 21px; border: 1px solid #222; border-radius: 10px; background: #505157; }
.add { width: 52px; }
.del { width: 67px; }
.flat { flex: none; }
.combo { display: flex; align-items: center; white-space: nowrap; }
.combo select { appearance: none; flex: 1; min-width: 0; outline: 0; }
.combo.box { height: 20px; padding: 0 4px 0 2px; background: #505157; border-radius: 3px; }
.dlg-body { display: flex; justify-content: space-between; align-items: flex-start; padding: 10px 8px 0; }
.noise { display: flex; flex-direction: column; gap: 6px; width: 200px; }
.graph { width: 200px; height: 100px; }
.params { display: grid; grid-template-columns: auto 124px; column-gap: 10px; row-gap: 6px; padding-top: 27px; align-items: center; }
.params label { text-align: right; }
.params .avg { grid-column: 2; }
.params .tick { padding-left: 4px; height: 20px; }
.params .slider { height: 20px; }
.dlg-foot { display: flex; align-items: center; gap: 8px; height: 28px; padding: 0 2px; margin-top: 9px; }
.wide { width: 149px; }
.end { margin-left: auto; }

.slider { display: grid; min-width: 0; height: 19px; align-items: center; }
.slider > * { grid-area: 1 / 1; }
.slider > svg { margin-left: 2px; z-index: 1; pointer-events: none; }
.slider span { text-align: center; white-space: nowrap; z-index: 1; pointer-events: none; color: #dcdcdc; }
.slider.left span { text-align: left; padding-left: 3px; }
.slider.small { font-size: 10px; line-height: 16px; }
.slider .toright { text-align: right; padding-right: 5px; }
.slider input { appearance: none; width: 100%; min-width: 0; height: 100%; border: 1px solid #141414; border-radius: 3px; background: linear-gradient(#62768e, #62768e) left / var(--v) 100% no-repeat #202020; }
.slider input::-webkit-slider-thumb { appearance: none; width: 2px; height: 2px; opacity: 0; }
.p7 { --v: 7%; } .p80 { --v: 80%; } .p54 { --v: 54%; } .p58 { --v: 58%; } .p79 { --v: 80%; } .p66 { --v: 66%; }
.slider .pmin { --v: 60%; background-position: right; }

.side-panels { display: flex; flex-direction: column; width: 270px; flex: none; border-left: 1px solid #3a3a3a; border-right: 2px solid #2a313b; background: #222; }
.collapse.right { justify-content: flex-start; height: 9px; padding: 1px 0 0 5px; background: none; flex: none; }
.panel { flex: none; background: #333; display: flex; flex-direction: column; }
.ph { display: flex; align-items: center; margin: 0; height: 23px; flex: none; padding: 0 1px; border-radius: 5px 5px 0 0; background: #505156; font-size: 13px; font-weight: 600; color: #dedede; gap: 3px; }
.ph > .combo { margin-left: auto; font-size: 11px; font-weight: 400; gap: 3px; }
.ph > .flat { margin-left: 3px; }
.ph > .push.push { margin-left: auto; }
.push.push { margin-left: auto; }
.display { height: 75px; margin-bottom: 5px; gap: 1px; background: #2b2b2b; }
.amp { display: grid; grid-template-columns: 19px 120px 1fr; gap: 3px; padding: 0 2px 0 3px; height: 20px; align-items: center; }
.fft { margin: 0 2px; }
.fft span { padding-left: 28px; }
.mods { height: 371px; margin-bottom: 3px; padding-bottom: 2px; }
.mod-area { flex: 1; min-height: 0; display: flex; background: #262626; }
.mod-list { list-style: none; margin: 0; padding: 0; flex: 1; overflow: hidden; height: 100%; }
.mod { display: flex; justify-content: flex-start; gap: 6px; width: 100%; height: 22px; padding: 0 4px; border-top: 1px solid #454545; border-bottom: 1px solid #262626; background: #333; }
.mod.on { background: #c0c0c0; color: #222; border-top-color: #c0c0c0; }
.chain { flex: none; border-bottom: 0; }
.thumb { width: 8px; height: 146px; margin-left: 1px; border-radius: 4px; background: #4c5158; }
.chans { height: 111px; margin-bottom: 4px; }
.chan { display: flex; align-items: center; height: 22px; padding-left: 11px; background: #c0c0c0; color: #222; border-top: 1px solid #333; border-bottom: 1px solid #333; }
.cid { width: 17px; font-size: 11px; }
.blank { flex: 1; background: #292929; }
.ms { display: grid; grid-template-columns: 21px 21px; height: 20px; margin-right: 5px; border: 1px solid #222; border-radius: 4px; overflow: hidden; background: #222; column-gap: 1px; flex: none; }
.ms button { background: #696969; color: #000; font: bold 12px/16px "DejaVu Sans", sans-serif; }
.ms.lit button { background: #d4d4d4; }
.strip { display: flex; align-items: center; height: 23px; padding: 0 2px 0 3px; }
.strip > svg { margin-right: 8px; }
.lays { flex: 1; min-height: 180px; margin-bottom: 3px; }
.layer { display: flex; height: 42px; padding-left: 3px; border-top: 1px solid #262626; }
.layer.on { background: #c0c0c0; color: #222; }
.swatch { width: 22px; margin-right: 3px; background: #555; color: #fff; display: flex; justify-content: center; border-radius: 2px; }
.on .swatch { background: #7a00ff; }
.quad { height: 41px; grid-template-rows: 19px 19px; row-gap: 1px; margin-right: 1px; }
.lbody { flex: 1; display: flex; flex-direction: column; justify-content: space-between; padding: 0 1px 2px 0; min-width: 0; }
.lname { padding-left: 2px; font-size: 12px; }
.lbody .slider { height: 18px; }
.tall { height: 25px; padding-left: 2px; gap: 5px; }
.tall .ms { margin-right: -2px; }
.white { width: 21px; height: 21px; border-radius: 3px; background: #e4e4e4; color: #111; }
.laguna { flex: 1; height: 18px; padding-right: 6px; border: 1px solid #666; border-radius: 3px; background: linear-gradient(90deg, #2c2c2c, #747474 85%, #555 86%); color: #bbb; font-size: 12px; }
.laguna select { text-align: center; text-align-last: center; }
.laguna .chev { stroke: #999; }
.narrow { width: 14px; }

.status { display: flex; align-items: center; height: 27px; flex: none; padding-left: 3px; background: #333; border-bottom: 1px solid #4a4f58; }
.fmt { width: 473px; flex: none; }
.deck { display: flex; gap: 1px; border-radius: 3px; overflow: hidden; background: #222; }
.deck button { width: 28px; height: 19px; background: #b4b4b4; }
.status .vsep { margin: 0 4px; height: 16px; }
.clock { width: 84px; height: 19px; padding-left: 7px; border-radius: 4px; background: #202020; font-size: 12px; margin-right: 1px; }
.out { width: 138px; font-size: 11px; }
.meter { display: flex; justify-content: space-between; width: 141px; height: 19px; margin-left: 1px; padding: 0 1px 0 3px; background: #000; color: #777; font-size: 9px; line-height: 18px; }
.sizer { width: 16px; height: 16px; margin-left: auto; align-self: flex-end; stroke: #999; stroke-width: 2; fill: none; }
</style>
